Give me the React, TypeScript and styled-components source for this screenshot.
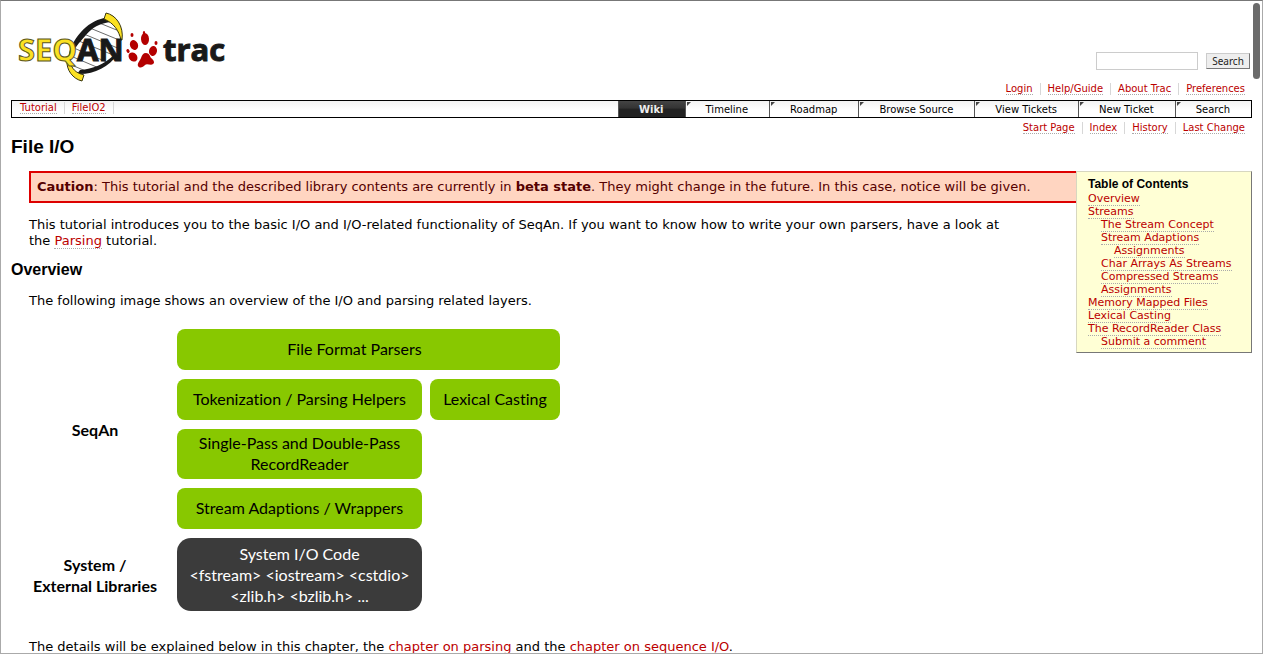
import React from "react";
import styled, { createGlobalStyle } from "styled-components";

const GlobalStyle = createGlobalStyle`
  * { box-sizing: border-box; }
  body { margin: 0; background: #fff; color: #000; font: 13px/16px "DejaVu Sans", Verdana, sans-serif; }
`;

const Page = styled.div`
  padding: 8px 11px 0;
`;

const WindowFrame = styled.div`
  position: fixed;
  inset: 0;
  border: 1px solid #aaa;
  border-top-color: #777;
  pointer-events: none;
`;

const ScrollThumb = styled.div`
  position: fixed;
  top: 3px;
  right: 3px;
  width: 7px;
  height: 76px;
  border-radius: 4px;
  background: #6b6b6b;
`;

const Header = styled.header`
  display: flex;
  justify-content: space-between;
  height: 74px;
`;

const SearchForm = styled.form`
  display: flex;
  align-items: center;
  align-self: flex-end;
  gap: 8px;
  padding: 0 2px 12px 0;
`;

const SearchInput = styled.input`
  width: 102px;
  height: 18px;
  padding: 0 4px;
  border: 1px solid #ccc;
  font: 11px "DejaVu Sans", sans-serif;
`;

const SearchButton = styled.button`
  width: 44px;
  height: 16px;
  padding: 0;
  border: 1px solid #ccc;
  border-right-color: #777;
  border-bottom-color: #777;
  background: #eee;
  color: #222;
  font: 10px/12px "Noto Sans", sans-serif;
`;

const LinkList = styled.ul<{ $start?: boolean }>`
  display: flex;
  justify-content: ${(p) => (p.$start ? "flex-start" : "flex-end")};
  margin: 0;
  padding: 1px 0 0;
  list-style: none;
  font-size: 10px;
  line-height: 12px;
  li {
    height: 12px;
    padding: 0 7px;
    border-right: 1px solid #d7d7d7;
  }
  li:last-child {
    border-right: ${(p) => (p.$start ? "1px solid #d7d7d7" : "0")};
  }
`;

const Link = styled.a<{ $plain?: boolean }>`
  color: #b00;
  text-decoration: none;
  border-bottom: ${(p) => (p.$plain ? "0" : "1px dotted #aaa")};
`;

const MetaRow = styled.nav`
  height: 18px;
`;

const MainBar = styled.div`
  display: flex;
  justify-content: space-between;
  height: 18px;
  padding-left: 1px;
  border: 1px solid #000;
  background: linear-gradient(#f2f2f2, #fff 60%);
`;

const Tabs = styled.nav`
  display: flex;
  font-size: 10px;
  line-height: 17px;
`;

const Tab = styled.a<{ $active?: boolean }>`
  position: relative;
  padding: 0 21px 0 20px;
  border-left: 1px solid #555;
  color: ${(p) => (p.$active ? "#eee" : "#000")};
  background: ${(p) => (p.$active ? "linear-gradient(#444, #333 45%, #222 50%, #222)" : "none")};
  font-weight: ${(p) => (p.$active ? 700 : 400)};
  text-decoration: none;
  &::before {
    content: "";
    display: ${(p) => (p.$active ? "none" : "block")};
    position: absolute;
    top: 1px;
    left: 1px;
    border-top: 4px solid #444;
    border-right: 4px solid transparent;
  }
`;

const ContextRow = styled.nav`
  padding-top: 3px;
`;

const Title = styled.h1`
  margin: 2px 0 13px;
  font: bold 19px/22px "Liberation Sans", Arial, sans-serif;
`;

const Section = styled.h2`
  margin: 12px 0;
  font: bold 16px/18px "Liberation Sans", Arial, sans-serif;
`;

const Article = styled.div`
  display: flex;
  align-items: flex-start;
`;

const Content = styled.main`
  flex: 1;
`;

const Caution = styled.div`
  margin-left: 18px;
  padding: 6px;
  border: 2px solid #d00;
  border-right: 0;
  background: #ffd5c1;
  color: #500;
`;

const Paragraph = styled.p`
  margin: 14px 60px 0 18px;
`;

const Toc = styled.aside`
  width: 176px;
  padding: 5px 11px 4px;
  border: 1px solid #d7d7c0;
  border-right-color: #777;
  border-bottom-color: #777;
  background: #ffffd5;
  font-size: 11px;
  line-height: 13px;
`;

const TocTitle = styled.h4`
  margin: 0;
  font: bold 12px/15px "Liberation Sans", Arial, sans-serif;
`;

const TocItem = styled.div<{ $level: number }>`
  padding-left: ${(p) => p.$level * 13}px;
  white-space: nowrap;
`;

const Diagram = styled.figure`
  display: grid;
  grid-template-columns: 140px 245px 130px;
  column-gap: 8px;
  row-gap: 9px;
  margin: 20px 0 28px 18px;
  font: 16px/21px Lato, sans-serif;
  font-variant-ligatures: none;
  text-align: center;
`;

const Layer = styled.div<{ $dark?: boolean; $wide?: boolean; $column?: number }>`
  display: grid;
  align-content: center;
  grid-column: ${(p) => (p.$wide ? "2 / 4" : p.$column || 2)};
  min-height: 41px;
  padding: ${(p) => (p.$dark ? "5px 0" : p.$wide ? "3px 28px 5px 0" : "3px 0 5px")};
  border-radius: ${(p) => (p.$dark ? 14 : 8)}px;
  background: ${(p) => (p.$dark ? "#3b3b3b" : "#88c800")};
  color: ${(p) => (p.$dark ? "#fff" : "#000")};
`;

const LayerLabel = styled.div<{ $rows: string }>`
  grid-column: 1;
  grid-row: ${(p) => p.$rows};
  align-self: center;
  padding-right: 8px;
  font-weight: 700;
`;

function Logo() {
  return (
    <svg width="220" height="74" viewBox="11 8 220 74" role="img" aria-label="SeqAn trac">
      <defs>
        <clipPath id="helix">
          <path d="M105 20C90 23 76 36 71 50C67 60 69 70 78 73C94 72 109 63 116 50C121 40 121 28 112 22Z" />
        </clipPath>
      </defs>
      <g clipPath="url(#helix)" stroke="#444" strokeWidth="0.8">
        <path d="M92 20L124 33M85 26L124 42M79 32L120 49M74 39L118 57M69 46L114 65M66 54L106 71M64 62L98 76" fill="none" />
      </g>
      <path d="M69 58C68 50 74 40 81 32C87 25 95 20 104 18L112 22C99 23 92 28 86 35C79 43 72 50 71 60Z" fill="#191919" />
      <path d="M77 74C93 75 109 67 117 55L113 56C104 64 93 69 80 70Z" fill="#191919" />
      <path d="M121 40C119 31 114 23 104 19L106 13C116 15 124 26 122 40Z" fill="#fbe122" stroke="#38360f" strokeWidth="1" />
      <path d="M67 60C66 70 73 79 82 81L84 75C76 73 71 69 70 60Z" fill="#fbe122" stroke="#38360f" strokeWidth="1" />
      <g fontFamily="Noto Sans" fontWeight="700" fontSize="31">
        <text x="18" y="61" fill="#fbe122" stroke="#5b571e" strokeWidth="1">SEQ</text>
        <text x="77" y="61" fill="#191919" stroke="#191919" strokeWidth="1">AN</text>
      </g>
      <g fill="#b40000">
        <ellipse cx="134" cy="45" rx="4" ry="5" transform="rotate(-22 134 45)" />
        <ellipse cx="145" cy="39" rx="4" ry="6" transform="rotate(-4 145 39)" />
        <ellipse cx="153" cy="51" rx="4" ry="5" transform="rotate(12 153 51)" />
        <ellipse cx="133" cy="57" rx="4" ry="5" transform="rotate(-42 133 57)" />
        <ellipse cx="132" cy="35" rx="1.5" ry="2" />
        <ellipse cx="144" cy="33" rx="1.2" ry="2" />
        <ellipse cx="156" cy="43" rx="1.5" ry="2" />
        <ellipse cx="128" cy="51" rx="1.5" ry="2" transform="rotate(-30 128 51)" />
        <path d="M146 53C149 53 150 56 151 58C154 60 155 63 153 64C151 66 147 63 145 65C143 67 140 69 138 66C137 63 140 61 141 58C142 55 143 53 146 53Z" />
      </g>
      <text x="163" y="61" fontFamily="Open Sans" fontWeight="700" fontSize="31" fill="#191919" stroke="#191919" strokeWidth="1">trac</text>
    </svg>
  );
}

const metaLinks = ["Login", "Help/Guide", "About Trac", "Preferences"];
const contextLinks = ["Start Page", "Index", "History", "Last Change"];
const tabs = ["Wiki", "Timeline", "Roadmap", "Browse Source", "View Tickets", "New Ticket", "Search"];
const toc: [string, number][] = [
  ["Overview", 0], ["Streams", 0], ["The Stream Concept", 1], ["Stream Adaptions", 1], ["Assignments", 2],
  ["Char Arrays As Streams", 1], ["Compressed Streams", 1], ["Assignments", 1], ["Memory Mapped Files", 0],
  ["Lexical Casting", 0], ["The RecordReader Class", 0], ["Submit a comment", 1],
];

function Links({ items, start }: { items: string[]; start?: boolean }) {
  return (
    <LinkList $start={start}>
      {items.map((t) => <li key={t}><Link href="#">{t}</Link></li>)}
    </LinkList>
  );
}

export default function App() {
  return (
    <>
      <GlobalStyle />
      <Page>
        <Header>
          <Logo />
          <SearchForm>
            <SearchInput type="text" aria-label="Search" />
            <SearchButton type="button">Search</SearchButton>
          </SearchForm>
        </Header>
        <MetaRow><Links items={metaLinks} /></MetaRow>
        <MainBar>
          <Links items={["Tutorial", "FileIO2"]} start />
          <Tabs>{tabs.map((t, i) => <Tab key={t} href="#" $active={i === 0}>{t}</Tab>)}</Tabs>
        </MainBar>
        <ContextRow><Links items={contextLinks} /></ContextRow>
        <Title>File I/O</Title>
        <Article>
          <Content>
            <Caution><b>Caution</b>: This tutorial and the described library contents are currently in <b>beta state</b>. They might change in the future. In this case, notice will be given.</Caution>
            <Paragraph>This tutorial introduces you to the basic I/O and I/O-related functionality of SeqAn. If you want to know how to write your own parsers, have a look at the <Link href="#">Parsing</Link> tutorial.</Paragraph>
            <Section>Overview</Section>
            <Paragraph>The following image shows an overview of the I/O and parsing related layers.</Paragraph>
            <Diagram>
              <LayerLabel $rows="1 / 5">SeqAn</LayerLabel>
              <Layer $wide>File Format Parsers</Layer>
              <Layer>Tokenization / Parsing Helpers</Layer>
              <Layer $column={3}>Lexical Casting</Layer>
              <Layer>Single-Pass and Double-Pass<br />RecordReader</Layer>
              <Layer>Stream Adaptions / Wrappers</Layer>
              <LayerLabel $rows="5">System /<br />External Libraries</LayerLabel>
              <Layer $dark>System I/O Code<br />&lt;fstream&gt; &lt;iostream&gt; &lt;cstdio&gt;<br />&lt;zlib.h&gt; &lt;bzlib.h&gt; ...</Layer>
            </Diagram>
            <Paragraph>The details will be explained below in this chapter, the <Link href="#" $plain>chapter on parsing</Link> and the <Link href="#" $plain>chapter on sequence I/O</Link>.</Paragraph>
          </Content>
          <Toc>
            <TocTitle>Table of Contents</TocTitle>
            {toc.map(([t, l], i) => <TocItem key={i} $level={l}><Link href="#">{t}</Link></TocItem>)}
          </Toc>
        </Article>
      </Page>
      <ScrollThumb />
      <WindowFrame />
    </>
  );
}
